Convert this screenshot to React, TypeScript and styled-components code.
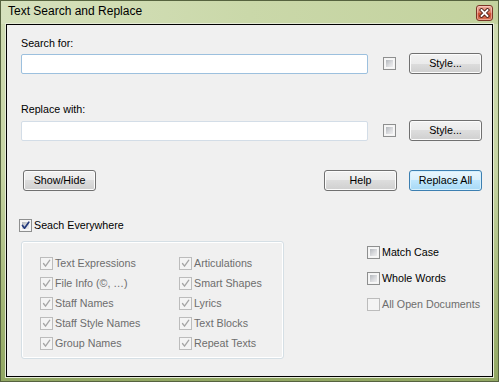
import React from "react";
import styled, { createGlobalStyle, css } from "styled-components";

const GlobalStyle = createGlobalStyle`
  html, body {
    margin: 0;
    padding: 0;
    background: #ffffff;
  }
  body {
    font-family: "Liberation Sans", Arial, sans-serif;
    font-size: 10.7px;
    color: #000;
  }
`;

const Window = styled.div`
  width: 499px;
  height: 382px;
  box-sizing: border-box;
  border: 1px solid #56633f;
  background: linear-gradient(to bottom, #d0dcb3 0%, #c6d4a3 45%, #a3b676 80%, #92a763 100%);
  display: flex;
  flex-direction: column;
`;

const TitleBar = styled.div`
  height: 23px;
  display: flex;
  justify-content: space-between;
  align-items: flex-start;
  padding: 0 5px 0 7px;
  background: linear-gradient(to right, #d6e1bd 0%, #cad8a9 50%, #c3d29e 100%);
`;

const Title = styled.div`
  margin-top: 3px;
  font-size: 12px;
  line-height: 14px;
  color: #000;
`;

const CloseButton = styled.div`
  margin-top: 4px;
  width: 17px;
  height: 16px;
  box-sizing: border-box;
  border: 1px solid #7b3526;
  border-radius: 3px;
  background: linear-gradient(to bottom, #eeb1a2 0%, #dc7d66 45%, #c9492f 55%, #d77557 100%);
  box-shadow: inset 0 0 0 1px rgba(255, 220, 210, 0.5);
  display: flex;
  align-items: center;
  justify-content: center;
`;

const Client = styled.div`
  flex: 1;
  margin: 0 5px 4px 5px;
  border: 1px solid #000;
  box-shadow: 0 0 0 1px #e6ecd8;
  background: #f0f0f0;
  padding: 12px 10px 0 14px;
  display: flex;
  flex-direction: column;
`;

const FieldLabel = styled.div<{ $top: number; $bottom: number }>`
  margin-top: ${(p) => p.$top}px;
  margin-bottom: ${(p) => p.$bottom}px;
  line-height: 13px;
  height: 13px;
`;

const FieldRow = styled.div`
  display: flex;
  align-items: center;
  height: 21px;
`;

const TextInput = styled.input<{ $focused?: boolean }>`
  flex: 1;
  height: 20px;
  align-self: flex-end;
  box-sizing: border-box;
  margin: 0 15px 0 0;
  padding: 0 3px;
  background: #fff;
  border: 1px solid ${(p) => (p.$focused ? "#9cc0de" : "#d3dde7")};
  border-radius: 2px;
  outline: none;
  font-family: inherit;
  font-size: 11px;
`;

const StyleToggle = styled.span`
  display: flex;
  margin-right: 13px;
`;

const Button = styled.div<{ $default?: boolean }>`
  width: 73px;
  height: 21px;
  box-sizing: border-box;
  border: 1px solid #707070;
  border-radius: 3px;
  background: linear-gradient(to bottom, #f2f2f2 0%, #ebebeb 50%, #dddddd 50%, #cfcfcf 100%);
  box-shadow: inset 0 0 0 1px #fcfcfc;
  display: flex;
  align-items: center;
  justify-content: center;
  line-height: 13px;
  color: #000;

  ${(p) =>
    p.$default &&
    css`
      border-color: #3c7fb1;
      background: linear-gradient(to bottom, #eaf6fd 0%, #d9f0fc 50%, #bee6fd 50%, #a7d9f5 100%);
      box-shadow: inset 0 0 0 1px #d6f0fd;
    `}
`;

const ButtonRow = styled.div`
  display: flex;
  align-items: center;
  margin-top: 29px;
  padding-left: 2px;
  gap: 12px;
`;

const Spacer = styled.div`
  flex: 1;
`;

const Box = styled.span<{ $disabled?: boolean }>`
  position: relative;
  flex: none;
  width: 13px;
  height: 13px;
  box-sizing: border-box;
  border: 1px solid ${(p) => (p.$disabled ? "#bcbcbc" : "#8e8f8f")};
  background: #f4f4f4;

  &::after {
    content: "";
    position: absolute;
    inset: 1px;
    background: ${(p) =>
      p.$disabled
        ? "#f4f4f4"
        : "linear-gradient(135deg, #b4b8bd 0%, #dcdde0 60%, #eeeeef 100%)"};
    border: 1px solid ${(p) => (p.$disabled ? "#f4f4f4" : "#f7f7f7")};
    box-sizing: border-box;
  }
`;

const Tick = styled.svg`
  position: absolute;
  left: -1px;
  top: -1px;
  z-index: 1;
`;

const CheckRow = styled.label<{ $disabled?: boolean }>`
  display: flex;
  align-items: center;
  gap: 2px;
  height: 13px;
  line-height: 13px;
  white-space: nowrap;
  color: ${(p) => (p.$disabled ? "#6d6d6d" : "#000")};
`;

const EverywhereRow = styled(CheckRow)`
  margin-top: 28px;
  margin-left: -2px;
`;

const OptionsArea = styled.div`
  display: flex;
  align-items: flex-start;
  margin-top: 9px;
`;

const GroupBox = styled.div`
  width: 263px;
  height: 118px;
  box-sizing: border-box;
  border: 1px solid #d5dfe5;
  border-radius: 3px;
  box-shadow: inset 0 0 0 1px #ffffff;
  padding: 15px 0 0 18px;
  display: grid;
  grid-template-columns: 139px auto;
  grid-auto-rows: 13px;
  row-gap: 7px;
  align-content: start;
`;

const RightColumn = styled.div`
  margin-left: 83px;
  padding-top: 5px;
  display: flex;
  flex-direction: column;
  gap: 13px;
`;

interface CheckProps {
  label: string;
  checked?: boolean;
  disabled?: boolean;
}

const CheckBox: React.FC<{ checked?: boolean; disabled?: boolean }> = ({
  checked,
  disabled,
}) => (
  <Box $disabled={disabled}>
    {checked && (
      <Tick width="13" height="13" viewBox="0 0 13 13">
        <polyline
          points="3.5,6.5 5.5,9.2 9.8,3.2"
          fill="none"
          stroke={disabled ? "#a6a6a6" : "#22397c"}
          strokeWidth={disabled ? 1.3 : 1.7}
          strokeLinecap="round"
          strokeLinejoin="round"
        />
      </Tick>
    )}
  </Box>
);

const Check: React.FC<CheckProps> = ({ label, checked, disabled }) => (
  <CheckRow $disabled={disabled}>
    <CheckBox checked={checked} disabled={disabled} />
    <span>{label}</span>
  </CheckRow>
);

const groupItems = [
  "Text Expressions",
  "Articulations",
  "File Info (©, …)",
  "Smart Shapes",
  "Staff Names",
  "Lyrics",
  "Staff Style Names",
  "Text Blocks",
  "Group Names",
  "Repeat Texts",
];

const App: React.FC = () => {
  return (
    <>
      <GlobalStyle />
      <Window>
        <TitleBar>
          <Title>Text Search and Replace</Title>
          <CloseButton>
            <svg width="11" height="10" viewBox="0 0 11 10">
              <path d="M2.5 2 L8.5 8 M8.5 2 L2.5 8" stroke="#4a1d14" strokeWidth="3.6" strokeLinecap="square" />
              <path d="M2.5 2 L8.5 8 M8.5 2 L2.5 8" stroke="#ffffff" strokeWidth="1.8" strokeLinecap="square" />
            </svg>
          </CloseButton>
        </TitleBar>
        <Client>
          <FieldLabel $top={0} $bottom={3}>
            Search for:
          </FieldLabel>
          <FieldRow>
            <TextInput $focused />
            <StyleToggle>
              <CheckBox />
            </StyleToggle>
            <Button>Style...</Button>
          </FieldRow>

          <FieldLabel $top={29} $bottom={4}>
            Replace with:
          </FieldLabel>
          <FieldRow>
            <TextInput />
            <StyleToggle>
              <CheckBox />
            </StyleToggle>
            <Button>Style...</Button>
          </FieldRow>

          <ButtonRow>
            <Button>Show/Hide</Button>
            <Spacer />
            <Button>Help</Button>
            <Button $default>Replace All</Button>
          </ButtonRow>

          <EverywhereRow>
            <CheckBox checked />
            <span>Seach Everywhere</span>
          </EverywhereRow>

          <OptionsArea>
            <GroupBox>
              {groupItems.map((item) => (
                <Check key={item} label={item} checked disabled />
              ))}
            </GroupBox>
            <RightColumn>
              <Check label="Match Case" />
              <Check label="Whole Words" />
              <Check label="All Open Documents" disabled />
            </RightColumn>
          </OptionsArea>
        </Client>
      </Window>
    </>
  );
};

export default App;
